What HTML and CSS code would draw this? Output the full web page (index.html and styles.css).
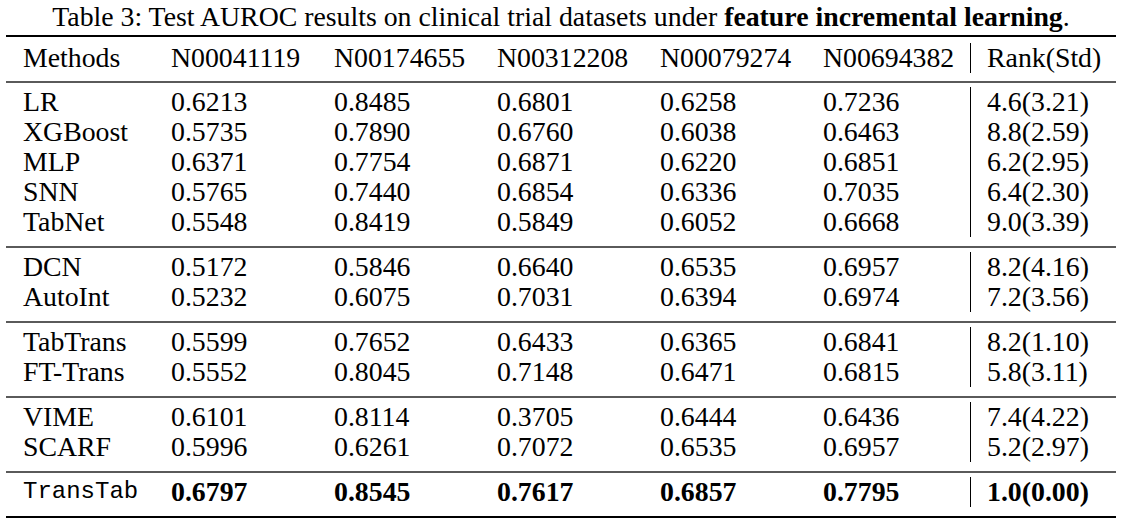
FILE: index.html
```html
<!DOCTYPE html>
<html>
<head>
<meta charset="utf-8">
<link rel="stylesheet" href="styles.css">
</head>
<body>
<div class="page">
  <p class="caption">Table 3: Test AUROC results on clinical trial datasets under <b>feature incremental learning</b>.</p>
  <div class="table">
    <div class="group head">
      <div class="row"><span>Methods</span><span>N00041119</span><span>N00174655</span><span>N00312208</span><span>N00079274</span><span>N00694382</span><span class="rank">Rank(Std)</span></div>
    </div>
    <div class="group">
      <div class="row"><span>LR</span><span>0.6213</span><span>0.8485</span><span>0.6801</span><span>0.6258</span><span>0.7236</span><span class="rank">4.6(3.21)</span></div>
      <div class="row"><span>XGBoost</span><span>0.5735</span><span>0.7890</span><span>0.6760</span><span>0.6038</span><span>0.6463</span><span class="rank">8.8(2.59)</span></div>
      <div class="row"><span>MLP</span><span>0.6371</span><span>0.7754</span><span>0.6871</span><span>0.6220</span><span>0.6851</span><span class="rank">6.2(2.95)</span></div>
      <div class="row"><span>SNN</span><span>0.5765</span><span>0.7440</span><span>0.6854</span><span>0.6336</span><span>0.7035</span><span class="rank">6.4(2.30)</span></div>
      <div class="row"><span>TabNet</span><span>0.5548</span><span>0.8419</span><span>0.5849</span><span>0.6052</span><span>0.6668</span><span class="rank">9.0(3.39)</span></div>
    </div>
    <div class="group">
      <div class="row"><span>DCN</span><span>0.5172</span><span>0.5846</span><span>0.6640</span><span>0.6535</span><span>0.6957</span><span class="rank">8.2(4.16)</span></div>
      <div class="row"><span>AutoInt</span><span>0.5232</span><span>0.6075</span><span>0.7031</span><span>0.6394</span><span>0.6974</span><span class="rank">7.2(3.56)</span></div>
    </div>
    <div class="group">
      <div class="row"><span>TabTrans</span><span>0.5599</span><span>0.7652</span><span>0.6433</span><span>0.6365</span><span>0.6841</span><span class="rank">8.2(1.10)</span></div>
      <div class="row"><span>FT-Trans</span><span>0.5552</span><span>0.8045</span><span>0.7148</span><span>0.6471</span><span>0.6815</span><span class="rank">5.8(3.11)</span></div>
    </div>
    <div class="group">
      <div class="row"><span>VIME</span><span>0.6101</span><span>0.8114</span><span>0.3705</span><span>0.6444</span><span>0.6436</span><span class="rank">7.4(4.22)</span></div>
      <div class="row"><span>SCARF</span><span>0.5996</span><span>0.6261</span><span>0.7072</span><span>0.6535</span><span>0.6957</span><span class="rank">5.2(2.97)</span></div>
    </div>
    <div class="group last">
      <div class="row best"><span class="mono">TransTab</span><span>0.6797</span><span>0.8545</span><span>0.7617</span><span>0.6857</span><span>0.7795</span><span class="rank">1.0(0.00)</span></div>
    </div>
  </div>
</div>
</body>
</html>
```

FILE: styles.css
```css
html, body {
  margin: 0;
  padding: 0;
  background: #fff;
}

body {
  font-family: "Liberation Serif", "Times New Roman", serif;
  font-size: 27.8px;
  color: #000;
}

.page {
  width: 1110px;
  margin-left: 6px;
  padding-top: 2px;
}

.caption {
  margin: 0 0 3px 0;
  line-height: 30px;
  text-align: center;
  white-space: nowrap;
}

.caption b {
  font-weight: bold;
}

.table {
  border-top: 2px solid #000;
  border-bottom: 2px solid #000;
}

.group {
  padding: 4px 0 9px 0;
}

.group.head {
  padding: 6px 0 8px 0;
}

.group + .group {
  border-top: 2px solid #5a5a5a;
}

.row {
  display: grid;
  grid-template-columns: 148px 163px 163px 163px 163px 147px 1fr;
  padding-left: 17px;
  line-height: 30px;
  height: 30px;
  white-space: nowrap;
}

.rank {
  border-left: 1px solid #000;
  padding-left: 16px;
}

.best span {
  font-weight: bold;
}

.best .mono {
  font-family: "Liberation Mono", "Courier New", monospace;
  font-weight: normal;
  font-size: 24px;
}
```
